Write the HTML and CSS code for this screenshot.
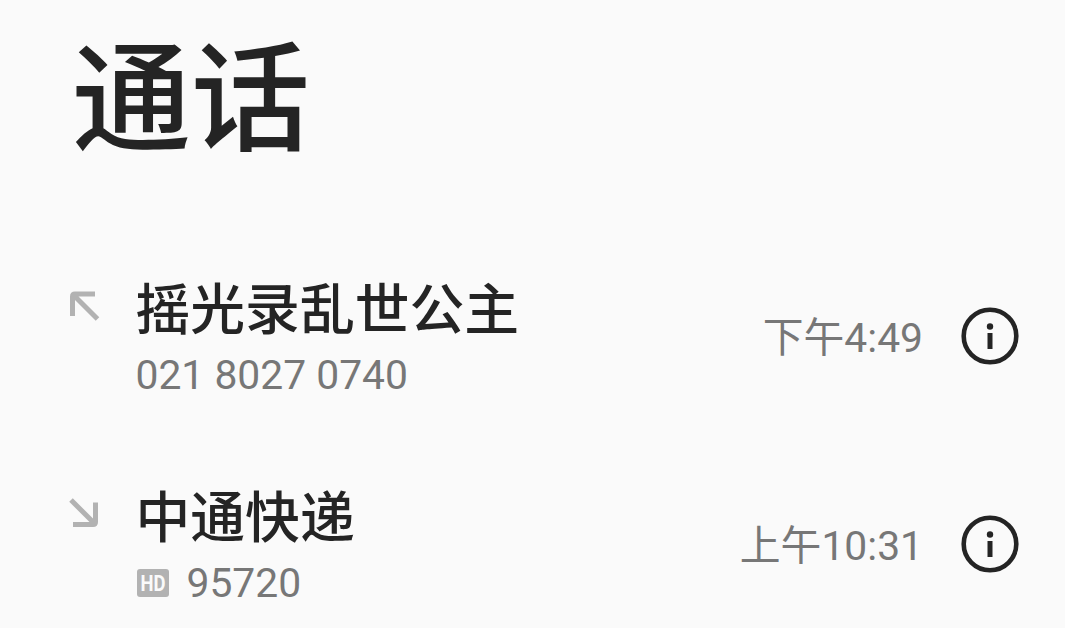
FILE: index.html
```
<!DOCTYPE html>
<html lang="zh-CN">

<head>
    <meta charset="UTF-8">
    <title>通话</title>
    <link rel="stylesheet" href="styles.css">
</head>

<body>
    <h1 class="title">通话</h1>

    <div class="call-list">
        <div class="call">
            <!-- outgoing -->
            <svg class="direction" viewBox="0 0 32 32">
                <path d="M27 4H7Q4.500 4 4.500 6.500V26M6 5.500L29.500 29" />
            </svg>
            <div class="caller">
                <div class="name">摇光录乱世公主</div>
                <div class="number">021 8027 0740</div>
            </div>
            <div class="time">下午4:49</div>
            <svg class="info" viewBox="0 0 58 58">
                <circle class="ring" cx="29" cy="29" r="26.3" />
                <circle cx="29" cy="19.500" r="3.2" />
                <rect x="26.500" y="26" width="5" height="16" />
            </svg>
        </div>

        <div class="call">
            <!-- incoming -->
            <svg class="direction" viewBox="0 0 32 32">
                <path d="M27.500 4.500V24Q27.500 26.500 25 26.500H5M26 25L3 2" />
            </svg>
            <div class="caller">
                <div class="name">中通快递</div>
                <div class="number">
                    <svg class="hd" viewBox="0 0 32 28">
                        <rect width="32" height="28" rx="3" />
                        <text x="3.500" y="22" textLength="25" lengthAdjust="spacingAndGlyphs">HD</text>
                    </svg>
                    95720
                </div>
            </div>
            <div class="time">上午10:31</div>
            <svg class="info" viewBox="0 0 58 58">
                <circle class="ring" cx="29" cy="29" r="26.3" />
                <circle cx="29" cy="19.500" r="3.2" />
                <rect x="26.500" y="26" width="5" height="16" />
            </svg>
        </div>
    </div>
</body>

</html>
```

FILE: styles.css
```
* {
    box-sizing: border-box;
}

body {
    font-family: Roboto, "Noto Sans CJK SC", sans-serif;
    background-color: #fafafa;
    color: #242424;
    margin: 0;
}

.title {
    font-size: 119px;
    font-weight: 500;
    line-height: 160px;
    margin: 0;
    padding: 22px 0 0 72px;
}

.call-list {
    padding: 62px 46px 0 68px;
}

.call {
    display: flex;
    height: 208px;
}

.call:last-child {
    height: 176px;
}

.direction {
    width: 32px;
    height: 32px;
    margin-top: 46px;
    fill: none;
    stroke: #b2b2b2;
    stroke-width: 5;
}

.caller {
    flex: 1;
    margin-left: 35.5px;
    padding-top: 33px;
}

.name {
    font-size: 54.8px;
    font-weight: 500;
    line-height: 66px;
}

.number {
    display: flex;
    align-items: center;
    color: #777;
    font-size: 40.8px;
    line-height: 65px;
}

.hd {
    width: 32px;
    height: 28px;
    margin: 0 18px 2px 1px;
    fill: #b2b2b2;
}

.hd text {
    fill: #fafafa;
    font-size: 22px;
    font-weight: bold;
}

.time {
    color: #777;
    font-size: 40.8px;
    line-height: 60px;
    margin: 64px 38px 0 0;
}

.info {
    width: 58px;
    height: 58px;
    margin-top: 63px;
    fill: #242424;
}

.ring {
    fill: none;
    stroke: #242424;
    stroke-width: 4.6;
}
```
